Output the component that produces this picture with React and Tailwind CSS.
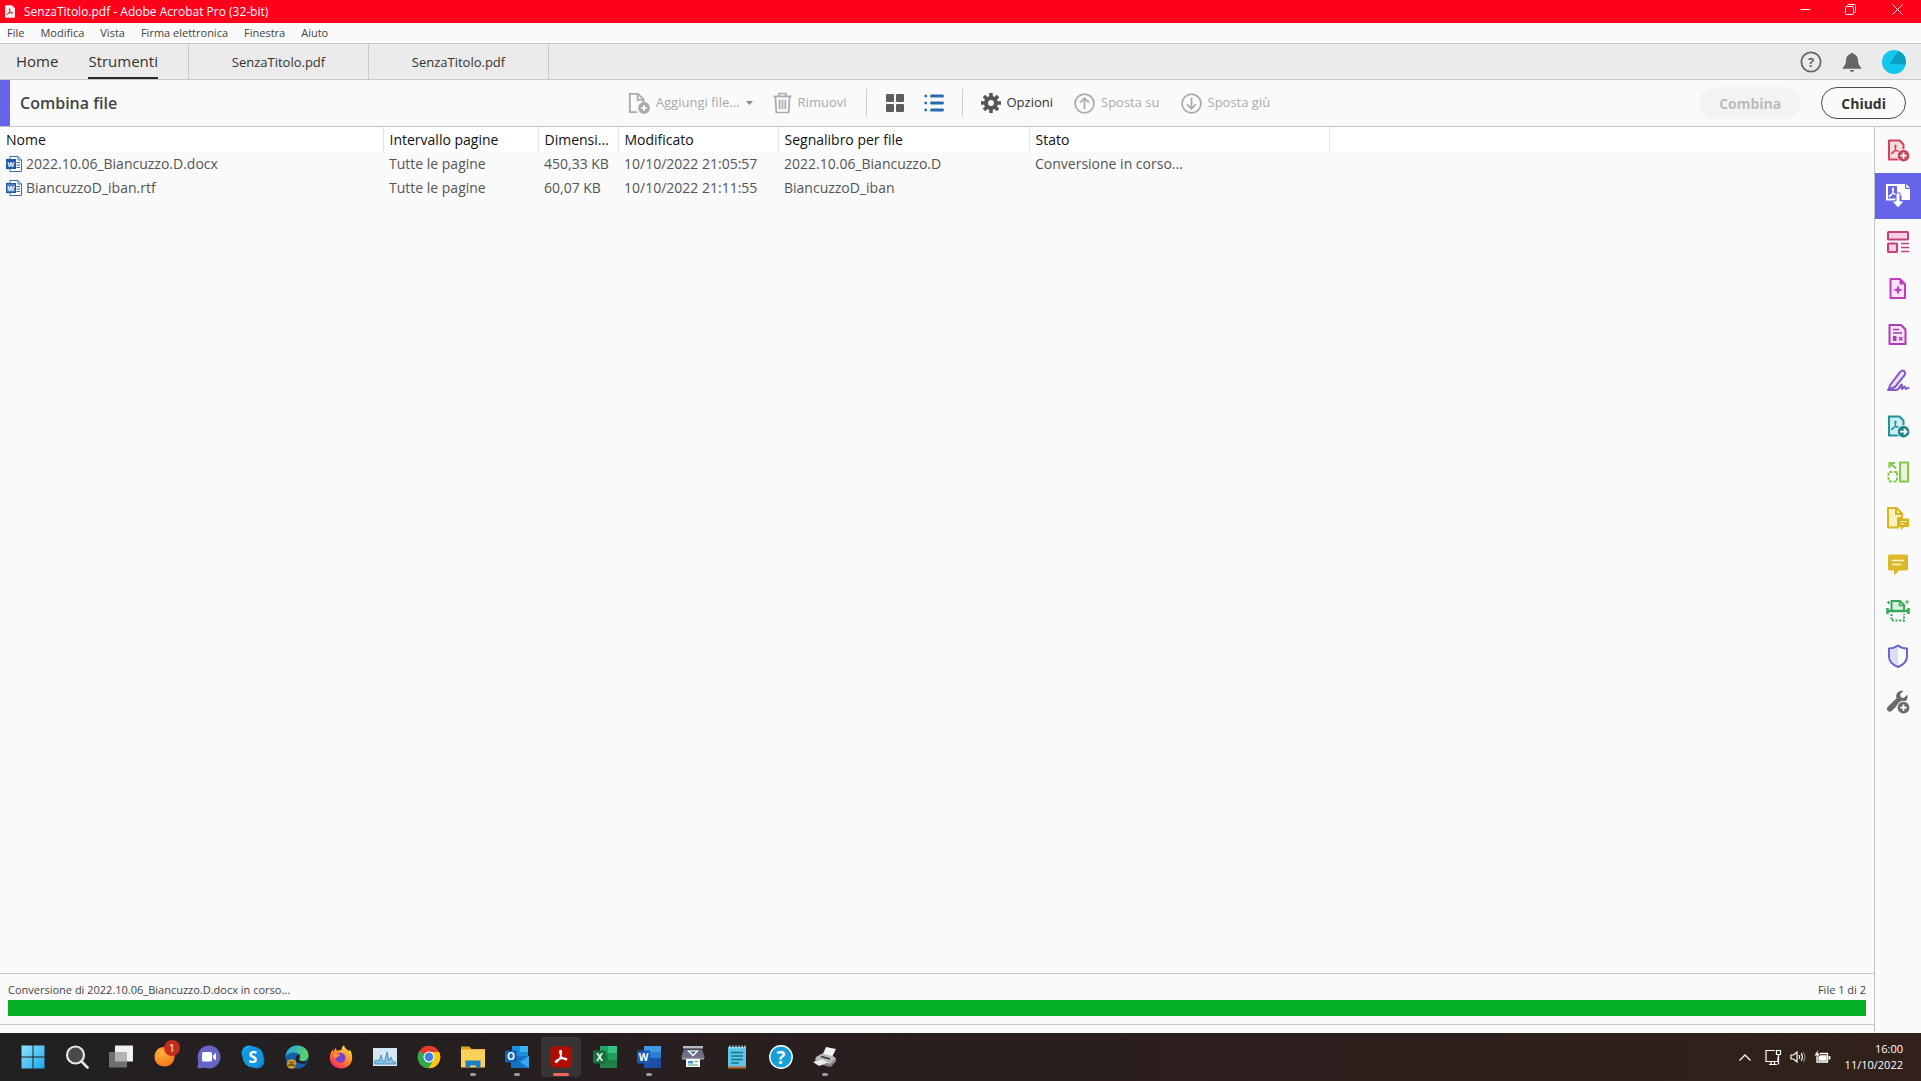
import React, { useState } from 'react';

const MENUS = ['File', 'Modifica', 'Vista', 'Firma elettronica', 'Finestra', 'Aiuto'];

const COLUMNS = [
  { label: 'Nome', width: 'w-[383px]' },
  { label: 'Intervallo pagine', width: 'w-[155px]' },
  { label: 'Dimensi...', width: 'w-20' },
  { label: 'Modificato', width: 'w-40' },
  { label: 'Segnalibro per file', width: 'w-[251px]' },
  { label: 'Stato', width: 'w-[300px]' },
];

const FILES = [
  {
    name: '2022.10.06_Biancuzzo.D.docx',
    pages: 'Tutte le pagine',
    size: '450,33 KB',
    modified: '10/10/2022 21:05:57',
    bookmark: '2022.10.06_Biancuzzo.D',
    status: 'Conversione in corso...',
  },
  {
    name: 'BiancuzzoD_iban.rtf',
    pages: 'Tutte le pagine',
    size: '60,07 KB',
    modified: '10/10/2022 21:11:55',
    bookmark: 'BiancuzzoD_iban',
    status: '',
  },
];

const Svg = ({ size = 24, children, ...rest }) => (
  <svg width={size} height={size} viewBox="0 0 24 24" fill="none" className="shrink-0" aria-hidden="true" {...rest}>
    {children}
  </svg>
);

/* ---------- file list icon ---------- */

const WordFileIcon = ({ outlined }) => (
  <svg width="16" height="18" viewBox="0 0 16 18" fill="none" className="shrink-0" aria-hidden="true">
    <path d="M4 1.500h8l3.500 3.500v11.500h-11.500z" fill="#fff" stroke="#3f6ea8" />
    <path d="M12 1.500v3.500h3.500" stroke="#3f6ea8" />
    <path d="M10.500 7.500h3.500M10.500 10h3.500M10.500 12.500h3.500" stroke="#2b66b8" />
    <rect x="0.500" y="4.500" width="9" height="9" fill={outlined ? '#4d7fc4' : '#1f56a8'} stroke="#1f56a8" />
    <text x="5" y="11.500" textAnchor="middle" fontSize="7" fontWeight="700" fill="#fff">W</text>
  </svg>
);

/* ---------- tools pane icons ---------- */

const Acrobat = ({ stroke }) => (
  <path d="M9.500 7c.8 0 .4 2.800-.4 4.600-.9 2-2.400 4-3.200 4-.9-.2.600-2 3-2.600 2-.5 4.600-.4 4.600.4s-2.400.2-3.700-1.500C8.800 10.500 8.700 7 9.500 7z" stroke={stroke} strokeWidth="1.100" />
);

const CreatePdf = () => (
  <Svg>
    <path d="M3 2.500h10.500l4 4V21.500H3z" fill="#fbdcdd" stroke="#d0435a" strokeWidth="2" strokeLinejoin="round" />
    <Acrobat stroke="#d0435a" />
    <circle cx="17.500" cy="17.700" r="6.800" fill="#fafafa" />
    <circle cx="17.500" cy="17.700" r="5.900" fill="#c9435b" />
    <path d="M17.500 14.500v6.400M14.300 17.700h6.400" stroke="#fff" strokeWidth="1.800" />
  </Svg>
);

const CombineFiles = () => (
  <Svg>
    <path d="M1 1h11v14.500H1z" stroke="#fff" strokeWidth="2" />
    <g transform="translate(-2.500 -3)"><Acrobat stroke="#fff" /></g>
    <path d="M11 0h8v5h5v11h-8.500v-4.500H11z" fill="#fff" />
    <path d="M20.200 0 24 3.800h-3.800z" fill="#fff" />
    <path d="M10 9h4v8h4.200L12 24l-6.200-7H10z" fill="#fff" stroke="#6665ea" strokeWidth="1" />
  </Svg>
);

const EditPdf = () => (
  <Svg fill="none">
    <rect x="2" y="2" width="20" height="7.500" rx="0.500" fill="#fbd0e3" stroke="#c2417f" strokeWidth="2" />
    <rect x="2" y="13.500" width="9" height="8.500" rx="0.500" fill="#fbd0e3" stroke="#c2417f" strokeWidth="2" />
    <path d="M15 13.500h8M15 17.500h8M15 21.500h8" stroke="#c2417f" strokeWidth="1.400" />
  </Svg>
);

const Enhance = () => (
  <Svg>
    <path d="M4.500 3h9.500l5 5v14H4.500z" fill="#fbe3fb" stroke="#bb3fc0" strokeWidth="2" strokeLinejoin="round" />
    <path d="M13.500 3v5.500H19z" fill="#bb3fc0" />
    <path d="M12 9l1.300 3.700L17 14l-3.700 1.300L12 19l-1.300-3.700L7 14l3.700-1.300z" fill="#bb3fc0" />
  </Svg>
);

const PrepareForm = () => (
  <Svg>
    <path d="M3.500 3h11.500l4.500 4.500V22h-16z" fill="#fbe3fb" stroke="#a93db4" strokeWidth="2" strokeLinejoin="round" />
    <path d="M7 7.500h6M7 11h9" stroke="#a93db4" strokeWidth="1.400" />
    <path d="M7 14h3.500v5H7z" fill="#a93db4" />
    <path d="m13 15 3.500 3.500M16.500 15 13 18.500" stroke="#a93db4" strokeWidth="1.300" />
  </Svg>
);

const SignPen = () => (
  <Svg strokeLinecap="round" strokeLinejoin="round" stroke="#8258cc" strokeWidth="2">
    <path d="M4.500 16.500 14 4.200c1.200-1.600 2.600-2.200 4-1.100 1.600 1.200 1.500 2.800.4 4.200L9 19l-6.500 2.500z" fill="#ebe0fa" />
    <path d="M2 22h8c3 0 4.500-5.500 5.500-5.500 1.200 0-.8 4.500.5 4.500 1 0 1.500-2.500 2.500-2.500s.3 2.500 1.400 2.500 1-1 2.600-1" />
  </Svg>
);

const ExportPdf = () => (
  <Svg>
    <path d="M3 2.500h10.500l4 4V21.500H3z" fill="#c9eeee" stroke="#23929a" strokeWidth="2" strokeLinejoin="round" />
    <Acrobat stroke="#23929a" />
    <circle cx="17.500" cy="17.700" r="6.800" fill="#fafafa" />
    <circle cx="17.500" cy="17.700" r="5.900" fill="#23868f" />
    <path d="M14 17.700h6.500M17.800 14.900l2.800 2.800-2.800 2.800" stroke="#fff" strokeWidth="1.700" />
  </Svg>
);

const OrganizePages = () => (
  <Svg stroke="#84c94b" strokeWidth="2">
    <rect x="14" y="2.500" width="8" height="19" fill="#e6f6d8" />
    <path d="M11 12H2.500v9.500H11z" strokeDasharray="3 1.600" />
    <path d="M10 8.500 4.500 3.500M3.500 8V3h5.500" strokeWidth="2.200" />
  </Svg>
);

const SendComments = () => (
  <Svg>
    <path d="M2 2h8.500l5.500 5.500V12h-4v9.500H2z" fill="#faf0c0" stroke="#d9b51b" strokeWidth="2" strokeLinejoin="round" />
    <path d="M10 2v6h6" stroke="#d9b51b" strokeWidth="2" />
    <path d="M12 12.500h11v8.500h-5l-3 3.200V21h-3z" fill="#d9b51b" />
    <path d="M14.500 15.500H21M14.500 18h4" stroke="#fff6cf" strokeWidth="1.200" />
  </Svg>
);

const Comment = () => (
  <Svg>
    <path d="M3.500 2.500h17a1.500 1.500 0 0 1 1.500 1.500v13a1.500 1.500 0 0 1-1.500 1.500h-7.500L8 23.500v-5H3.500A1.500 1.500 0 0 1 2 17V4a1.500 1.500 0 0 1 1.500-1.500z" fill="#dcb927" />
    <path d="M6 8.500h12M6 12.500h9" stroke="#fff6cf" strokeWidth="1.700" />
  </Svg>
);

const Scan = () => (
  <Svg stroke="#3aa757" strokeWidth="2">
    <path d="M5.500 12V3h8.500l4 4v5" fill="#d9f2de" />
    <path d="M13.500 3v4.500H18" strokeWidth="1.500" />
    <path d="M1.500 10v6M22.500 10v6M1.500 13h21" strokeWidth="2.600" />
    <path d="M5.500 16v6.500h12.500V16" strokeDasharray="2 1.500" />
    <path d="M21 2v4M19 4h4M2.500 3v3M1 4.500h3" strokeWidth="1" />
  </Svg>
);

const Shield = () => (
  <Svg>
    <path d="M12 1.500c2.500 2 5.500 3 9 3v8c0 4.500-3.500 8.200-9 10.500-5.500-2.300-9-6-9-10.500v-8c3.500 0 6.500-1 9-3z" fill="#fafafa" stroke="#6765d6" strokeWidth="2" strokeLinejoin="round" />
    <path d="M12 3v18.500c-4.500-2-7.800-5-7.800-9V5.600C7.200 5.400 9.800 4.500 12 3z" fill="#dcdcf6" />
  </Svg>
);

const MoreTools = () => (
  <Svg>
    <path d="M21.300 4.800 17.800 8l-3-.7-.7-3L17.400 1c-3-.8-6.100.7-7 3.600-.4 1.300-.3 2.600.2 3.700L1.800 16.700c-1.200 1.200-1.200 3 0 4.100 1.200 1.200 3 1.200 4.100 0l8.500-8.600c1.300.4 2.700.4 4-.2 2.600-1.100 3.800-4.300 2.900-7.200z" fill="#6a6a6a" />
    <circle cx="17.500" cy="17.700" r="7" fill="#fafafa" />
    <circle cx="17.500" cy="17.700" r="5.900" fill="#6a6a6a" />
    <path d="M17.500 14.500v6.400M14.300 17.700h6.400" stroke="#fff" strokeWidth="1.800" />
  </Svg>
);

const TOOLS = [
  { label: 'Crea PDF', Icon: CreatePdf },
  { label: 'Combina file', Icon: CombineFiles, active: true },
  { label: 'Modifica PDF', Icon: EditPdf },
  { label: 'Rich Media', Icon: Enhance },
  { label: 'Prepara modulo', Icon: PrepareForm },
  { label: 'Compila e firma', Icon: SignPen },
  { label: 'Esporta PDF', Icon: ExportPdf },
  { label: 'Organizza pagine', Icon: OrganizePages },
  { label: 'Invia per commenti', Icon: SendComments },
  { label: 'Commento', Icon: Comment },
  { label: 'Scansione e OCR', Icon: Scan },
  { label: 'Proteggi', Icon: Shield },
  { label: 'Altri strumenti', Icon: MoreTools },
];

/* ---------- taskbar icons ---------- */

const Start = () => (
  <Svg>
    <defs>
      <linearGradient id="win" x1="0" y1="0" x2="24" y2="24" gradientUnits="userSpaceOnUse">
        <stop stopColor="#8fe6ff" />
        <stop offset="1" stopColor="#1aa5ee" />
      </linearGradient>
    </defs>
    <path d="M.5.500h11v11H.500zM12.500.500h11v11h-11zM.500 12.500h11v11H.500zM12.500 12.500h11v11h-11z" fill="url(#win)" />
  </Svg>
);

const SearchGlass = () => (
  <Svg>
    <circle cx="10.500" cy="10" r="8.500" fill="#4a4a4c" stroke="#e6e6e6" strokeWidth="2.200" />
    <path d="m16.500 16.500 6 6" stroke="#e6e6e6" strokeWidth="2.600" strokeLinecap="round" />
  </Svg>
);

const TaskView = () => (
  <Svg>
    <path d="M6 .500h18v16H6z" fill="#f1f1f1" />
    <path d="M0 7h18v15.500H0z" fill="#6f6f70" />
    <path d="M6 7h12v9.500H6z" fill="#b3b3b3" />
  </Svg>
);

const Avast = () => (
  <Svg overflow="visible">
    <defs>
      <radialGradient id="orange" cx=".35" cy=".3" r=".9">
        <stop stopColor="#ffb03b" />
        <stop offset="1" stopColor="#f36b12" />
      </radialGradient>
    </defs>
    <path d="M11 2c6 0 10.500 4 10.500 9.800S17 21.500 11.500 21.500 1.500 18 1.500 12 5.500 2 11 2z" fill="url(#orange)" />
    <circle cx="19" cy="3" r="8" fill="#c42b1c" />
    <text x="19" y="7" textAnchor="middle" fontSize="11" fill="#fff">1</text>
  </Svg>
);

const Chat = () => (
  <Svg>
    <path d="M12 .500a11.500 11.500 0 1 1-4 22.300L.500 23.500 1.200 16A11.500 11.500 0 0 1 12 .500z" fill="#6664c4" />
    <rect x="5" y="7" width="10" height="9.500" rx="1.500" fill="#fff" />
    <path d="m16 10.500 3-2.500v7.500l-3-2.500z" fill="#fff" />
  </Svg>
);

const Skype = () => (
  <Svg>
    <circle cx="8" cy="8" r="7.500" fill="#18a6ea" />
    <circle cx="16" cy="16" r="7.500" fill="#1382d0" />
    <circle cx="12" cy="12" r="10.500" fill="#1496de" />
    <text x="12" y="17.500" textAnchor="middle" fontSize="16" fontWeight="700" fill="#fff">S</text>
  </Svg>
);

const Edge = () => (
  <Svg>
    <defs>
      <linearGradient id="edge" x1="2" y1="4" x2="23" y2="12" gradientUnits="userSpaceOnUse">
        <stop stopColor="#26a8dd" />
        <stop offset="1" stopColor="#5fd65a" />
      </linearGradient>
    </defs>
    <circle cx="12" cy="12" r="11.500" fill="#155fa9" />
    <path d="M.500 12C1 5 6 .500 12 .500c7 0 11.500 4.800 11.500 9.500 0 4-3 6-6.500 6-2.500 0-3.500-1-2.800-2.300C16 10.500 13.500 7.500 9.500 7.500 5 7.500 1.500 9.500.500 12z" fill="url(#edge)" />
    <path d="M14.200 13.700c1-1.700.9-3.200 0-4.400-2.500.7-4 3-3.500 5.700.8 3.500 5.300 4.500 9.800 3.200l2.500-2.400c-2 .8-9.600 1.200-8.800-2.100z" fill="#222021" />
    <circle cx="6.500" cy="19" r="4.800" fill="#c99a3a" />
    <path d="M3 20.500c2-1 4.500-1 7.500.5M4.500 17.500h4" stroke="#6b4712" strokeWidth="1.500" />
  </Svg>
);

const Firefox = () => (
  <Svg>
    <defs>
      <linearGradient id="fox" x1="20" y1="2" x2="5" y2="23" gradientUnits="userSpaceOnUse">
        <stop stopColor="#ffe14a" />
        <stop offset=".45" stopColor="#ff8a2b" />
        <stop offset="1" stopColor="#f5245f" />
      </linearGradient>
    </defs>
    <path d="M12 23.500C5.500 23.500.800 18.800.800 12.800c0-3.600 1.200-6.300 2.700-8.300l.8 2.500 2-4 2 3c1.200-1 2.700-1.200 4-.9.200-2 1-3.800 2.700-4.900.5 3 3.300 4.200 5 6l.7-1.700c1.700 2.200 2.500 5 2.500 8.200 0 6.300-4.800 10.800-11.200 10.800z" fill="url(#fox)" />
    <circle cx="11.500" cy="12.700" r="5" fill="#7a3fd0" />
    <path d="M4 9c3-1 5 .500 7.500.8-1 2-3.800 1.500-4.500 3.500C5.500 12.500 4.500 11 4 9z" fill="#ff9a30" />
  </Svg>
);

const Monitor = () => (
  <Svg>
    <path d="M0 3h24v18H0z" fill="#d5e9f5" />
    <path d="M1.500 19V16l3-1 1.500 1 2-6 1.500 5 2 2 2.500-10 2 9 2-4 1.500 4 3 1v2z" fill="#8cc0e0" stroke="#3f82b5" strokeWidth=".8" />
  </Svg>
);

const Chrome = () => (
  <Svg>
    <circle cx="12" cy="12" r="11.300" fill="#e33b2e" />
    <path d="M12 12 2.200 6.300A11.300 11.300 0 0 0 11.500 23.300L17 14.800z" fill="#2da94f" />
    <path d="M12 12v11.300A11.300 11.300 0 0 0 22.200 7H12z" fill="#fdc60a" />
    <path d="m11.500 23.300 5.300-8.600-4.800-2.700-3 4z" fill="#2da94f" />
    <circle cx="12" cy="12" r="5.500" fill="#fff" />
    <circle cx="12" cy="12" r="4.400" fill="#3f7fea" />
  </Svg>
);

const Explorer = () => (
  <Svg>
    <path d="M0 1.500h8.500L10.500 4H24v8H0z" fill="#dfa41d" />
    <path d="M0 4.500h24v18H0z" fill="#fdd05a" />
    <path d="M4.500 15.500h15v7H15v-2H9v2H4.500z" fill="#1b7fc6" />
  </Svg>
);

const Outlook = () => (
  <Svg>
    <path d="M7 1h16v10H7z" fill="#1b8fde" />
    <path d="M15 1h8v6h-8z" fill="#36b3f0" />
    <path d="M6 11h18v12H6z" fill="#1674c4" />
    <path d="m24 11-9 6 9 6z" fill="#35a9ee" />
    <rect x="0" y="5.500" width="12" height="12" rx="1" fill="#0f62b5" />
    <text x="6" y="15" textAnchor="middle" fontSize="10" fontWeight="700" fill="#fff">O</text>
  </Svg>
);

const AcrobatApp = () => (
  <Svg>
    <rect x="1.500" y="1.500" width="21" height="21" rx="3" fill="#b30b00" />
    <path d="M11.500 5.500c1.700 0 .9 4-.3 6.700-1.100 2.400-3.300 5.300-4.500 5.100-1.200-.6 1.300-2.800 4.600-3.600 3-.7 6.500-.6 6.500.6s-3.300.3-5-2.100c-2-2.400-2.700-6.700-1.300-6.700z" stroke="#fff" strokeWidth="1.400" />
  </Svg>
);

const Excel = () => (
  <Svg>
    <path d="M7 1h17v22H7z" fill="#1c8048" />
    <path d="M15 1h9v7h-9z" fill="#34c481" />
    <path d="M7 1h8v7H7z" fill="#22a366" />
    <path d="M15 8h9v7h-9z" fill="#1f9e5e" />
    <rect x="0" y="5.500" width="13" height="13" rx="1" fill="#12713d" />
    <text x="6.500" y="15.500" textAnchor="middle" fontSize="10" fontWeight="700" fill="#fff">X</text>
  </Svg>
);

const Word = () => (
  <Svg>
    <path d="M7 1h17v22H7z" fill="#1e4fa8" />
    <path d="M7 1h17v6H7z" fill="#3f9ae6" />
    <path d="M7 7h17v6H7z" fill="#2b7cd3" />
    <rect x="0" y="5.500" width="13" height="13" rx="1" fill="#1b55b5" />
    <text x="6.500" y="15.500" textAnchor="middle" fontSize="10" fontWeight="700" fill="#fff">W</text>
  </Svg>
);

const ScannerApp = () => (
  <Svg>
    <path d="M2 1h20v2.500H2z" fill="#b9bac8" />
    <path d="M3 4.500h18l3 8H0z" fill="#6d6e85" />
    <path d="M6 5.500h12l-6 6z" fill="#fff" />
    <path d="M9 6.500h6l-3 3z" fill="#3c6ea5" />
    <path d="M1 12.500h22v2H1z" fill="#9fa0b0" />
    <path d="M5 14h14v8H5z" fill="#f4f6f8" />
    <path d="M7 16h5v2.500H7z" fill="#4c8fd0" />
    <path d="M13.500 16.500H17M7 20h10" stroke="#57a55a" />
  </Svg>
);

const Notepad = () => (
  <Svg>
    <path d="M3 2h18v20H3z" fill="#5cc5e6" />
    <path d="M3 21.500h18v2H3z" fill="#c4692b" />
    <path d="M5 .500v3M8 .500v3M11 .500v3M14 .500v3M17 .500v3M20 .500v3" stroke="#c9edf7" strokeWidth="1.200" />
    <path d="M6 7.500h12M6 11h12M6 14.500h12M6 18h8" stroke="#17708f" strokeWidth="1.600" />
  </Svg>
);

const Help = () => (
  <Svg>
    <circle cx="12" cy="12" r="11.200" fill="#169fd8" stroke="#fff" strokeWidth="1.400" />
    <text x="12" y="18.500" textAnchor="middle" fontSize="18" fontWeight="700" fill="#fff">?</text>
  </Svg>
);

const Printer = () => (
  <Svg>
    <path d="m13 2 10 2-5 10-9-3z" fill="#f2f2f2" />
    <path d="m3 12 6-3.500 12 3 2 2-6 6-15-4z" fill="#b9b9b9" />
    <path d="M2 15.500 17 19l6-5.500v3L17.500 22 2 18z" fill="#858585" />
    <path d="m0 17 9-2.500 6 3L6 21z" fill="#ececec" />
    <path d="m8 11.500 9 2.500" stroke="#333" strokeWidth="1.400" />
  </Svg>
);

const TASKS = [
  { label: 'Start', Icon: Start },
  { label: 'Cerca', Icon: SearchGlass },
  { label: 'Visualizzazione attività', Icon: TaskView },
  { label: 'Avast', Icon: Avast },
  { label: 'Chat', Icon: Chat },
  { label: 'Skype', Icon: Skype },
  { label: 'Edge', Icon: Edge },
  { label: 'Firefox', Icon: Firefox },
  { label: 'Monitoraggio', Icon: Monitor },
  { label: 'Chrome', Icon: Chrome },
  { label: 'Esplora file', Icon: Explorer, running: true },
  { label: 'Outlook', Icon: Outlook, running: true },
  { label: 'Acrobat', Icon: AcrobatApp, active: true },
  { label: 'Excel', Icon: Excel },
  { label: 'Word', Icon: Word, running: true },
  { label: 'Scanner', Icon: ScannerApp },
  { label: 'Blocco note', Icon: Notepad },
  { label: 'Guida', Icon: Help },
  { label: 'Stampante', Icon: Printer, running: true },
];

/* ---------- sections ---------- */

const TitleBar = () => (
  <header className="flex h-[23px] items-center bg-[#ff001b] pl-[5px] text-white">
    <svg width="10" height="13" viewBox="0 0 11 14" fill="none" className="shrink-0" aria-hidden="true">
      <path d="M1 0h6.500L11 3.500V13a1 1 0 0 1-1 1H1a1 1 0 0 1-1-1V1a1 1 0 0 1 1-1z" fill="#fdeaea" />
      <path d="M5 4c.8 0 .5 2-.1 3.500C4.300 8.800 3.200 10.500 2.500 10.300c-.6-.4.8-1.500 2.600-1.900 1.600-.4 3.500-.3 3.500.3s-1.800.2-2.700-1.100C4.800 6.300 4.300 4 5 4z" stroke="#b3262c" />
    </svg>
    <h1 className="ml-[9px] flex-1 text-[12px] leading-4">SenzaTitolo.pdf - Adobe Acrobat Pro (32-bit)</h1>
    <div className="flex pb-1">
      <button type="button" aria-label="Riduci a icona" className="flex w-[45px] justify-center">
        <svg width="11" height="11" viewBox="0 0 11 11" fill="none" stroke="#fff"><path d="M.500 5.500h10" /></svg>
      </button>
      <button type="button" aria-label="Ripristina" className="flex w-[45px] justify-center">
        <svg width="11" height="11" viewBox="0 0 11 11" fill="none" stroke="#fff">
          <rect x=".5" y="2.500" width="8" height="8" rx="1" />
          <path d="M2.500 2.500v-1q0-1 1-1h6q1 0 1 1v6q0 1-1 1h-1" />
        </svg>
      </button>
      <button type="button" aria-label="Chiudi finestra" className="flex w-12 justify-center">
        <svg width="11" height="11" viewBox="0 0 11 11" fill="none" stroke="#fff"><path d="m.5.500 10 10M10.500.500l-10 10" /></svg>
      </button>
    </div>
  </header>
);

const MenuBar = () => (
  <nav className="flex h-5 items-center gap-4 bg-[#fafafa] px-[7px] text-[11px] leading-4 text-[#444]">
    {MENUS.map((menu) => (
      <button key={menu} type="button">{menu}</button>
    ))}
  </nav>
);

const TabBar = () => (
  <div className="flex h-[37px] items-stretch border-y border-[#c8c8c8] bg-[#ebebeb] text-[#333]">
    <div className="flex w-[189px] gap-[30px] border-r border-[#c8c8c8] pl-4 text-[15px]">
      <button type="button">Home</button>
      <button type="button" className="border-b-2 border-[#2c2c2c] pt-[2px]">Strumenti</button>
    </div>
    <button type="button" className="w-[180px] border-r border-[#c8c8c8] pt-[2px] text-[13px]">SenzaTitolo.pdf</button>
    <button type="button" className="w-[180px] border-r border-[#c8c8c8] pt-[2px] text-[13px]">SenzaTitolo.pdf</button>
    <div className="ml-auto flex items-center gap-5 pr-[15px]">
      <button type="button" aria-label="Guida">
        <Svg size={22}>
          <circle cx="12" cy="12" r="10.500" stroke="#666" strokeWidth="2" />
          <text x="12" y="17" textAnchor="middle" fontSize="14" fontWeight="700" fill="#666">?</text>
        </Svg>
      </button>
      <button type="button" aria-label="Notifiche">
        <Svg size={20}>
          <path d="M12 .800c1 0 1.700.7 1.700 1.700 3.700.8 5.300 3.700 5.500 7.500.3 4.500 1 6.500 3.800 8.500v1.500H1v-1.500c2.800-2 3.500-4 3.800-8.500.2-3.800 1.800-6.700 5.500-7.500 0-1 .7-1.700 1.700-1.700zM9.500 21.500h5c-.2 1.400-1 2.300-2.500 2.300s-2.300-.9-2.500-2.300z" fill="#666" />
        </Svg>
      </button>
      <button type="button" aria-label="Profilo">
        <Svg>
          <circle cx="12" cy="12" r="12" fill="#12c8f0" />
          <path d="M16 .700A12 12 0 0 1 23.700 14.500L8 14z" fill="#0c9fc2" />
        </Svg>
      </button>
    </div>
  </div>
);

const Toolbar = ({ view, setView }) => (
  <div className="grid h-[47px] grid-cols-[1fr_auto_1fr] items-center border-b border-[#c4c4c4] bg-[#fafafa] pr-[15px] text-[13px] text-[#333]">
    <h2 className="flex h-full items-center border-l-[10px] border-[#6665ea] pl-[10px] text-[16px] font-semibold text-[#444]">
      Combina file
    </h2>
    <div className="flex items-center pr-2">
      <button type="button" disabled className="flex items-center gap-[6px] text-[#ababab]">
        <Svg size={22} stroke="#ababab" strokeWidth="2">
          <path d="M10 22H2V2h9l6 6v5" />
          <path d="M10.500 2v6.500H17" />
          <circle cx="17.500" cy="17.500" r="5.500" fill="#ababab" />
          <path d="M17.500 14.500v6M14.500 17.500h6" stroke="#fff" />
        </Svg>
        Aggiungi file...
        <svg width="7" height="4" viewBox="0 0 7 4" aria-hidden="true"><path d="M0 0h7L3.500 4z" fill="#8a8a8a" /></svg>
      </button>
      <button type="button" disabled className="ml-5 flex items-center gap-[6px] text-[#ababab]">
        <svg width="19" height="22" viewBox="0 0 20 22" fill="none" stroke="#ababab" strokeWidth="1.800" aria-hidden="true">
          <path d="M.500 4h19M6.500 4V1h7v3M2.500 4l1 17h13l1-17M7 7.500v10M10 7.500v10M13 7.500v10" />
        </svg>
        Rimuovi
      </button>
      <span className="mx-[19px] h-[28px] w-px bg-[#cfcfcf]" />
      <button type="button" aria-label="Miniature" aria-pressed={view === 'grid'} onClick={() => setView('grid')}>
        <svg width="18" height="18" viewBox="0 0 18 18" fill="#5c5c5c">
          <rect width="8" height="8" rx="1" />
          <rect x="10" width="8" height="8" rx="1" />
          <rect y="10" width="8" height="8" rx="1" />
          <rect x="10" y="10" width="8" height="8" rx="1" />
        </svg>
      </button>
      <button type="button" aria-label="Elenco" aria-pressed={view === 'list'} onClick={() => setView('list')} className="ml-5">
        <svg width="20" height="20" viewBox="0 0 20 20" fill="none" stroke="#2a6bb0" strokeWidth="3" strokeLinecap="round">
          <path d="M7.500 3h11M7.500 10h11M7.500 17h11" />
          <path d="M.5 3H3M.5 10H3M.5 17H3" strokeLinecap="butt" strokeWidth="2.500" />
        </svg>
      </button>
      <span className="mx-[18px] h-[28px] w-px bg-[#cfcfcf]" />
      <button type="button" className="flex items-center gap-[6px]">
        <Svg size={20} stroke="#555">
          <circle cx="12" cy="12" r="6" strokeWidth="5" />
          <path d="M12 0v5M12 19v5M0 12h5M19 12h5M3.500 3.500 7 7M17 17l3.500 3.500M20.500 3.500 17 7M7 17l-3.500 3.500" strokeWidth="4.200" />
        </Svg>
        Opzioni
      </button>
      <button type="button" disabled className="ml-[21px] flex items-center gap-[6px] text-[#ababab]">
        <Svg size={21} stroke="#ababab" strokeWidth="2">
          <circle cx="12" cy="12" r="10.800" />
          <path d="M12 18.500V6M7 11l5-5 5 5" />
        </Svg>
        Sposta su
      </button>
      <button type="button" disabled className="ml-[21px] flex items-center gap-[6px] text-[#ababab]">
        <Svg size={21} stroke="#ababab" strokeWidth="2">
          <circle cx="12" cy="12" r="10.800" />
          <path d="M12 5.500V18M7 13l5 5 5-5" />
        </Svg>
        Sposta giù
      </button>
    </div>
    <div className="flex justify-end gap-5 text-[14px] font-bold">
      <button type="button" disabled className="h-8 rounded-full bg-[#f3f3f3] px-5 text-[#bcbcbc]">Combina</button>
      <button type="button" className="h-8 rounded-full border border-[#4b4b4b] px-[19px]">Chiudi</button>
    </div>
  </div>
);

const FileTable = () => (
  <table className="w-full table-fixed border-collapse text-left text-[14px] leading-6 text-[#555]">
    <thead className="bg-white text-[#111]">
      <tr>
        {COLUMNS.map((col) => (
          <th key={col.label} className={`${col.width} h-[25px] truncate border-r border-[#e4e4e4] px-[6px] py-0 font-normal`}>
            {col.label}
          </th>
        ))}
        <td />
      </tr>
    </thead>
    <tbody className="whitespace-nowrap">
      {FILES.map((file, idx) => (
        <tr key={file.name}>
          <td className="px-[6px] py-0">
            <span className="flex items-center gap-1">
              <WordFileIcon outlined={idx === 1} />
              {file.name}
            </span>
          </td>
          <td className="px-[6px] py-0">{file.pages}</td>
          <td className="px-[6px] py-0">{file.size}</td>
          <td className="px-[6px] py-0">{file.modified}</td>
          <td className="px-[6px] py-0">{file.bookmark}</td>
          <td className="px-[6px] py-0">{file.status}</td>
          <td />
        </tr>
      ))}
    </tbody>
  </table>
);

const StatusPanel = ({ progress }) => (
  <div className="border-t border-[#c8c8c8] text-[11px] leading-4 text-[#444]">
    <div className="border-b border-[#c8c8c8] px-2 pt-2 pb-2">
      <div className="flex justify-between pb-[2px]">
        <span>Conversione di 2022.10.06_Biancuzzo.D.docx in corso...</span>
        <span>File 1 di 2</span>
      </div>
      <div role="progressbar" aria-valuenow={progress} aria-label="Conversione" className="h-4 bg-[#e6e6e6]">
        <div className="h-full bg-[#06b025]" style={{ width: `${progress}%` }} />
      </div>
    </div>
    <div className="h-2" />
  </div>
);

const ToolsPane = () => (
  <aside className="w-[47px] shrink-0 border-l border-[#c4c4c4] bg-[#fafafa]">
    {TOOLS.map(({ label, Icon, active }) => (
      <button
        key={label}
        type="button"
        aria-label={label}
        className={`flex h-[46px] w-full items-center justify-center ${active ? 'bg-[#6665ea]' : ''}`}
      >
        <Icon />
      </button>
    ))}
  </aside>
);

const Taskbar = () => (
  <footer className="flex h-12 items-center bg-linear-to-r from-[#222021] via-[#2a1e1e] to-[#31211a] pl-[11px] pr-[18px] text-white">
    {TASKS.map(({ label, Icon, running, active }) => (
      <button key={label} type="button" aria-label={label} className="flex h-full w-11 items-center justify-center">
        <span className={`relative flex h-10 w-10 items-center justify-center rounded ${active ? 'bg-[#373435]' : ''}`}>
          <Icon />
          {running && <span className="absolute bottom-[1px] h-[3px] w-[6px] rounded-full bg-[#9a9a9a]" />}
          {active && <span className="absolute bottom-[1px] h-[3px] w-4 rounded-full bg-[#f2665e]" />}
        </span>
      </button>
    ))}
    <div className="ml-auto flex items-center gap-2">
      <button type="button" aria-label="Icone nascoste" className="mr-[6px]">
        <svg width="12" height="7" viewBox="0 0 12 7" fill="none" stroke="#fff" strokeWidth="1.300"><path d="m.5 6.500 5.500-5.500 5.500 5.500" /></svg>
      </button>
      <button type="button" aria-label="Rete">
        <svg width="17" height="17" viewBox="0 0 17 17" fill="none" stroke="#fff" strokeWidth="1.200">
          <path d="M10 1.500H1v11h12V8M4 15.500h8M6 12.500v3M9.500 12.500v3" />
          <path d="M11.500 1.500h4v4h-4zM13.500 5.500v10" />
        </svg>
      </button>
      <button type="button" aria-label="Volume">
        <svg width="16" height="14" viewBox="0 0 16 14" fill="none" stroke="#fff" strokeWidth="1.200">
          <path d="M1 5v4h2.500L7 12V2L3.500 5z" />
          <path d="M9 5q1.500 2 0 4M11 3.500q3 3.500 0 7" />
          <path d="M13 2q4 5 0 10" stroke="#8a8080" />
        </svg>
      </button>
      <button type="button" aria-label="Batteria">
        <svg width="17" height="14" viewBox="0 0 17 14" fill="none" stroke="#fff" strokeWidth="1.300">
          <path d="M6 3.500h7.500v8.500H3V7" />
          <path d="M6.500 6H12v4H5V7z" fill="#fff" />
          <path d="M15.500 6v3.500" strokeWidth="1.800" />
          <path d="M4 0 .500 5.500H3L2 9l4-5.500H3.500z" fill="#fff" stroke="none" />
        </svg>
      </button>
      <div className="ml-[6px] text-right text-[11px] leading-4">
        <div>16:00</div>
        <div>11/10/2022</div>
      </div>
    </div>
  </footer>
);

export default function App() {
  const [view, setView] = useState('list');

  return (
    <div className="flex min-h-screen flex-col bg-[#fafafa] font-['Open_Sans','Noto_Sans',sans-serif]">
      <TitleBar />
      <MenuBar />
      <TabBar />
      <Toolbar view={view} setView={setView} />
      <div className="flex flex-1">
        <main className="flex min-w-0 flex-1 flex-col">
          <div className="flex-1">
            <FileTable />
          </div>
          <StatusPanel progress={100} />
        </main>
        <ToolsPane />
      </div>
      <Taskbar />
    </div>
  );
}
